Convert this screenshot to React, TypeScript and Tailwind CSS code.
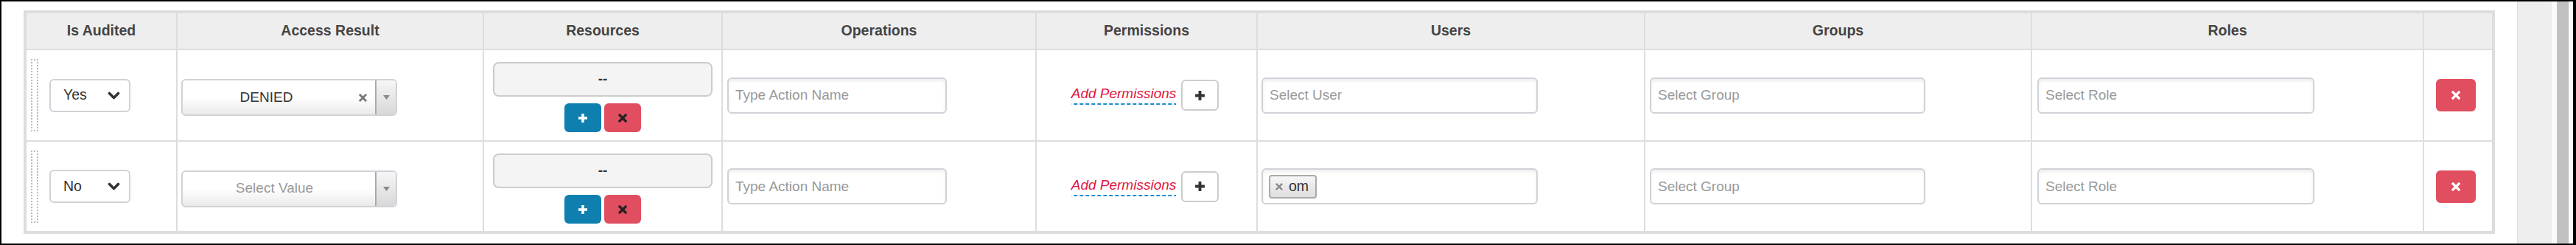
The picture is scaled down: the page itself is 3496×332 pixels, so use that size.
import React from "react";

const HEADERS = ["Is Audited", "Access Result", "Resources", "Operations", "Permissions", "Users", "Groups", "Roles", ""];

const inputBox =
  "h-[49px] rounded-[6px] border-2 border-[#cfd3d8] bg-white shadow-[inset_0_3px_4px_rgba(0,0,0,0.07)]";
const inputCls =
  inputBox + " px-[9px] text-[19px] text-[#333] placeholder:text-[#999] outline-none";

function XIcon({ size = 12, color = "#fff", stroke = 3.2 }: { size?: number; color?: string; stroke?: number }) {
  return (
    <svg width={size} height={size} viewBox="0 0 12 12">
      <path d="M2 2L10 10M10 2L2 10" stroke={color} strokeWidth={stroke} strokeLinecap="square" />
    </svg>
  );
}

function PlusIcon({ size = 14, color = "#fff" }: { size?: number; color?: string }) {
  return (
    <svg width={size} height={size} viewBox="0 0 14 14">
      <path d="M7 1V13M1 7H13" stroke={color} strokeWidth={3.6} />
    </svg>
  );
}

function AuditSelect({ value }: { value: string }) {
  return (
    <div className="w-[110px] h-[45px] rounded-[6px] border-2 border-[#cfd3d8] bg-white flex items-center justify-between pl-[17px] pr-[12px] text-[19.5px] text-[#333]">
      <span>{value}</span>
      <svg width="17" height="11" viewBox="0 0 17 11">
        <polyline points="2.5,2.5 8.5,8.5 14.5,2.5" fill="none" stroke="#333" strokeWidth={3.6} strokeLinecap="round" strokeLinejoin="round" />
      </svg>
    </div>
  );
}

function AccessSelect({ value }: { value?: string }) {
  return (
    <div className="w-[293px] h-[50px] mt-[6px] rounded-[6px] border-2 border-[#cfd3d8] bg-gradient-to-b from-white from-50% to-[#eaeaea] flex overflow-hidden">
      {value ? (
        <>
          <div className="flex-1 flex items-center justify-center text-[19px] text-[#333]">{value}</div>
          <div className="w-[34px] flex items-center justify-center">
            <XIcon size={11} color="#777" stroke={3} />
          </div>
        </>
      ) : (
        <div className="flex-1 flex items-center justify-center pr-[12px] text-[19px] text-[#999]">Select Value</div>
      )}
      <div className="w-[28px] border-l-2 border-[#aaa] bg-gradient-to-b from-[#f6f6f6] to-[#d8d8d8] flex items-center justify-center">
        <svg width="9" height="6" viewBox="0 0 9 6">
          <polygon points="0,0 9,0 4.5,6" fill="#888" />
        </svg>
      </div>
    </div>
  );
}

function Resources() {
  return (
    <div className="flex flex-col items-center gap-[9px] pt-[16px]">
      <div className="w-[298px] h-[47px] rounded-[8px] border-2 border-[#ccc] bg-[#f4f4f4] flex items-center justify-center text-[19px] font-bold text-[#333]">
        --
      </div>
      <div className="flex gap-[4px]">
        <button className="w-[50px] h-[39px] rounded-[6px] bg-[#0f7fb0] flex items-center justify-center">
          <PlusIcon />
        </button>
        <button className="w-[50px] h-[39px] rounded-[6px] bg-[#e04e60] flex items-center justify-center">
          <XIcon color="#222" />
        </button>
      </div>
    </div>
  );
}

function Permissions() {
  return (
    <div className="h-full flex items-center justify-center gap-[7px] pr-[4px]">
      <span className="italic text-[19px] leading-[22px] pb-[4px] text-[#e2143f] bg-[linear-gradient(to_right,#1a8bd0_5px,transparent_5px)] bg-[length:8px_2px] bg-repeat-x bg-bottom">
        Add Permissions
      </span>
      <button className="w-[51px] h-[42px] rounded-[6px] border-2 border-[#ccc] bg-white flex items-center justify-center">
        <PlusIcon size={15} color="#333" />
      </button>
    </div>
  );
}

function Row({ audited, access, user }: { audited: string; access?: string; user?: string }) {
  return (
    <>
      <div className="bg-white flex items-center pl-[6px] gap-[15px]">
        <div className="w-[10px] h-[98px] border-2 border-dotted border-[#bbb]" />
        <AuditSelect value={audited} />
      </div>
      <div className="bg-white flex items-center pl-[5px]">
        <AccessSelect value={access} />
      </div>
      <div className="bg-white">
        <Resources />
      </div>
      <div className="bg-white flex items-center pl-[6px]">
        <input className={inputCls + " w-[298px]"} placeholder="Type Action Name" />
      </div>
      <div className="bg-white">
        <Permissions />
      </div>
      <div className="bg-white flex items-center pl-[5px]">
        {user ? (
          <div className={inputBox + " w-[375px] flex items-center pl-[8px]"}>
            <span className="h-[32px] pl-[7px] pr-[9px] rounded-[4px] border-2 border-[#aaa] bg-gradient-to-b from-[#f6f6f6] to-[#dedede] flex items-center gap-[8px] text-[19.5px] text-[#333]">
              <XIcon size={10} color="#888" stroke={2.8} />
              {user}
            </span>
          </div>
        ) : (
          <input className={inputCls + " w-[375px]"} placeholder="Select User" />
        )}
      </div>
      <div className="bg-white flex items-center pl-[6px]">
        <input className={inputCls + " w-[374px]"} placeholder="Select Group" />
      </div>
      <div className="bg-white flex items-center pl-[7px]">
        <input className={inputCls + " w-[376px]"} placeholder="Select Role" />
      </div>
      <div className="bg-white flex items-center pl-[16px]">
        <button className="w-[54px] h-[44px] rounded-[6px] bg-[#e04e60] flex items-center justify-center">
          <XIcon />
        </button>
      </div>
    </>
  );
}

export default function App() {
  return (
    <div className="w-[3496px] h-[332px] border-t-2 border-l-2 border-b-2 border-r-4 border-black bg-white flex font-['Liberation_Sans',Arial,sans-serif]">
      <div className="w-[3414px] pl-[30px] pt-[12px]">
        <div className="w-[3354px] grid grid-cols-[203px_414px_322px_424px_298px_524px_523px_530px_92px] grid-rows-[48px_122px_121px] gap-[2px] bg-[#ddd] border-4 border-[#ddd]">
          {HEADERS.map((h, i) => (
            <div key={i} className="bg-[#eee] flex items-center justify-center font-bold text-[19.5px] text-[#444]">
              {h}
            </div>
          ))}
          <Row audited="Yes" access="DENIED" />
          <Row audited="No" user="om" />
        </div>
      </div>
      {/* scrollbar */}
      <div className="w-[76px] flex border-l border-[#ddd]">
        <div className="w-[46px] bg-[#eee]" />
        <div className="w-[7px] bg-[#fafafa]" />
        <div className="w-[16px] bg-[#c1c1c1]" />
        <div className="flex-1 bg-[#fafafa]" />
      </div>
    </div>
  );
}
